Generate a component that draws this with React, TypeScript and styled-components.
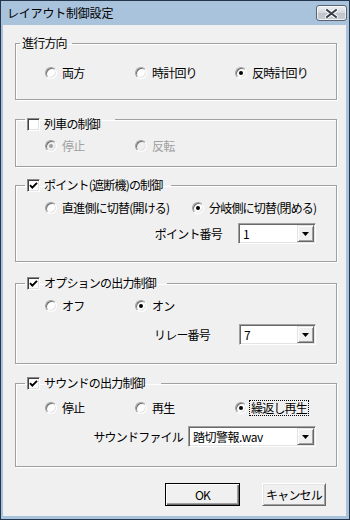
import React from "react";
import styled, { createGlobalStyle } from "styled-components";

const Global = createGlobalStyle`
  html, body { margin: 0; padding: 0; background: #ffffff; }
  body { font-family: "Noto Sans CJK JP", "Noto Sans", sans-serif; font-size: 12px; color: #000; }
  #root { width: 350px; height: 520px; }
`;

const Window = styled.div`
  width: 350px;
  height: 520px;
  box-sizing: border-box;
  border: 1px solid #23364c;
  background: #a9c3dd;
  padding: 0 3px 3px 2px;
  display: flex;
  flex-direction: column;
`;

const TitleBar = styled.div`
  height: 24px;
  flex: none;
  display: flex;
  align-items: flex-start;
  justify-content: space-between;
  padding: 0 0 0 4px;
`;

const TitleText = styled.span`
  line-height: 24px;
  font-size: 12px;
  letter-spacing: -0.2px;
  color: #000;
`;

const CloseButton = styled.div`
  width: 31px;
  height: 16px;
  margin-top: 4px;
  margin-right: -1px;
  box-sizing: border-box;
  border: 1px solid #5a6270;
  border-radius: 3px;
  background: linear-gradient(#eef0f3, #d3d7dd 50%, #bfc4cc 51%, #c9ced6);
  box-shadow: inset 0 0 0 1px rgba(255, 255, 255, 0.7);
  display: flex;
  align-items: center;
  justify-content: center;
`;

const Client = styled.div`
  flex: 1;
  background: #f0f0f0;
  display: flex;
  flex-direction: column;
  padding: 11px 9px 0 12px;
`;

const Group = styled.fieldset<{ $h: number; $mt: number }>`
  margin: ${(p) => p.$mt}px 0 0 0;
  padding: 0;
  min-width: 0;
  height: ${(p) => p.$h}px;
  box-sizing: border-box;
  border: 1px solid #a0a0a0;
  box-shadow: 1px 1px 0 #ffffff, inset 1px 1px 0 #ffffff;
  display: flex;
  flex-direction: column;
  flex: none;
`;

const Legend = styled.legend<{ $pl: number; $pr: number; $pt?: number }>`
  margin-left: ${(p) => p.$pl}px;
  padding: ${(p) => p.$pt ?? 0}px ${(p) => p.$pr}px 0 2px;
  line-height: 14px;
  font-size: 12px;
  letter-spacing: -0.8px;
  display: flex;
  align-items: center;
  color: #000;
`;

const CheckBox = styled.span`
  width: 13px;
  height: 13px;
  box-sizing: border-box;
  flex: none;
  border: 1px solid;
  border-color: #8a8a8a #ffffff #ffffff #8a8a8a;
  box-shadow: inset 1px 1px 0 #404040, inset -1px -1px 0 #e3e3e3;
  background: #ffffff;
  display: flex;
  align-items: center;
  justify-content: center;
  margin-right: 4px;
`;

const RadioRow = styled.div<{ $pt: number }>`
  display: flex;
  align-items: center;
  height: 14px;
  padding: ${(p) => p.$pt}px 0 0 29px;
`;

const RadioItem = styled.div<{ $w?: number }>`
  display: flex;
  align-items: center;
  height: 14px;
  flex: none;
  width: ${(p) => (p.$w ? `${p.$w}px` : "auto")};
`;

const RadioCircle = styled.span<{ $on?: boolean; $dis?: boolean }>`
  width: 12px;
  height: 12px;
  box-sizing: border-box;
  border-radius: 50%;
  flex: none;
  border: 1px solid;
  border-color: #a0a0a0 #ffffff #ffffff #a0a0a0;
  background: ${(p) => (p.$dis ? "#f0f0f0" : "#ffffff")};
  box-shadow: inset 1px 1px 0 #707070, inset -1px -1px 0 #e3e3e3;
  display: flex;
  align-items: center;
  justify-content: center;
  &::after {
    content: "";
    width: 4px;
    height: 4px;
    border-radius: 50%;
    background: ${(p) => (p.$dis ? "#a0a0a0" : "#000000")};
    display: ${(p) => (p.$on ? "block" : "none")};
  }
`;

const RadioText = styled.span<{ $dis?: boolean; $focus?: boolean }>`
  margin-left: ${(p) => (p.$focus ? 2 : 5)}px;
  padding: 0 ${(p) => (p.$focus ? 1 : 0)}px;
  border: ${(p) => (p.$focus ? "1px dotted #000" : "none")};
  line-height: 14px;
  white-space: nowrap;
  letter-spacing: -0.8px;
  color: ${(p) => (p.$dis ? "#a0a0a0" : "#000000")};
`;

const ComboRow = styled.div<{ $mt: number }>`
  display: flex;
  align-items: center;
  justify-content: flex-end;
  margin-top: ${(p) => p.$mt}px;
  padding-right: 20px;
`;

const FieldLabel = styled.span<{ $gap: number }>`
  margin-right: ${(p) => p.$gap}px;
  line-height: 14px;
  letter-spacing: -0.8px;
  white-space: nowrap;
`;

const Combo = styled.div<{ $w: number }>`
  width: ${(p) => p.$w}px;
  height: 21px;
  box-sizing: border-box;
  border: 1px solid;
  border-color: #a0a0a0 #ffffff #ffffff #a0a0a0;
  box-shadow: inset 1px 1px 0 #696969, inset -1px -1px 0 #e3e3e3;
  background: #ffffff;
  display: flex;
  align-items: stretch;
  padding: 1px;
`;

const ComboValue = styled.span`
  flex: 1;
  padding-left: 3px;
  line-height: 17px;
  font-size: 12px;
  letter-spacing: -0.5px;
  white-space: nowrap;
  overflow: hidden;
`;

const ComboButton = styled.span`
  width: 17px;
  flex: none;
  box-sizing: border-box;
  background: #f0f0f0;
  border: 1px solid;
  border-color: #e3e3e3 #696969 #696969 #e3e3e3;
  box-shadow: inset 1px 1px 0 #ffffff, inset -1px -1px 0 #a0a0a0;
  display: flex;
  align-items: center;
  justify-content: center;
`;

const ButtonRow = styled.div`
  display: flex;
  justify-content: flex-end;
  gap: 22px;
  margin-top: 16px;
  padding-right: 11px;
`;

const Button = styled.div<{ $w: number; $def?: boolean }>`
  width: ${(p) => p.$w}px;
  height: 23px;
  box-sizing: border-box;
  background: #f0f0f0;
  border: 1px solid;
  border-color: ${(p) => (p.$def ? "#000 #000 #000 #000" : "#ffffff #696969 #696969 #ffffff")};
  box-shadow: ${(p) =>
    p.$def
      ? "inset 1px 1px 0 #ffffff, inset -1px -1px 0 #696969, inset -2px -2px 0 #a0a0a0"
      : "inset 1px 1px 0 #e3e3e3, inset -1px -1px 0 #a0a0a0"};
  display: flex;
  align-items: center;
  justify-content: center;
  font-size: 12px;
  letter-spacing: -0.8px;
  line-height: 14px;
`;

type RadioProps = { label: string; on?: boolean; disabled?: boolean; focus?: boolean; w?: number };

function Radio({ label, on, disabled, focus, w }: RadioProps) {
  return (
    <RadioItem $w={w}>
      <RadioCircle $on={on} $dis={disabled} />
      <RadioText $dis={disabled} $focus={focus}>
        {label}
      </RadioText>
    </RadioItem>
  );
}

function Check({ checked }: { checked?: boolean }) {
  return (
    <CheckBox>
      {checked && (
        <svg width="9" height="9" viewBox="0 0 9 9">
          <path d="M1 4.2 L3.3 6.6 L8 1.8" fill="none" stroke="#000" strokeWidth="1.9" />
        </svg>
      )}
    </CheckBox>
  );
}

function ComboBox({ w, value }: { w: number; value: string }) {
  return (
    <Combo $w={w}>
      <ComboValue>{value}</ComboValue>
      <ComboButton>
        <svg width="7" height="4" viewBox="0 0 7 4">
          <path d="M0 0 H7 L3.5 4 Z" fill="#000" />
        </svg>
      </ComboButton>
    </Combo>
  );
}

export default function App() {
  return (
    <>
      <Global />
      <Window>
        <TitleBar>
          <TitleText>レイアウト制御設定</TitleText>
          <CloseButton>
            <svg width="13" height="9" viewBox="0 0 13 9">
              <path d="M2 1 L11 8 M11 1 L2 8" stroke="#ffffff" strokeWidth="4" strokeLinecap="square" />
              <path d="M2 1 L11 8 M11 1 L2 8" stroke="#3a3f48" strokeWidth="2" strokeLinecap="square" />
            </svg>
          </CloseButton>
        </TitleBar>
        <Client>
          <Group $h={64} $mt={0}>
            <Legend $pl={4} $pr={5}>進行方向</Legend>
            <RadioRow $pt={16}>
              <Radio label="両方" w={90} />
              <Radio label="時計回り" w={100} />
              <Radio label="反時計回り" on />
            </RadioRow>
          </Group>

          <Group $h={60} $mt={7}>
            <Legend $pl={9} $pr={15} $pt={10}>
              <Check />
              列車の制御
            </Legend>
            <RadioRow $pt={8}>
              <Radio label="停止" on disabled w={90} />
              <Radio label="反転" disabled />
            </RadioRow>
          </Group>

          <Group $h={84} $mt={11}>
            <Legend $pl={9} $pr={8}>
              <Check checked />
              ポイント(遮断機)の制御
            </Legend>
            <RadioRow $pt={9}>
              <Radio label="直進側に切替(開ける)" w={147} />
              <Radio label="分岐側に切替(閉める)" on />
            </RadioRow>
            <ComboRow $mt={8}>
              <FieldLabel $gap={16}>ポイント番号</FieldLabel>
              <ComboBox w={78} value="1" />
            </ComboRow>
          </Group>

          <Group $h={88} $mt={14}>
            <Legend $pl={9} $pr={11}>
              <Check checked />
              オプションの出力制御
            </Legend>
            <RadioRow $pt={9}>
              <Radio label="オフ" w={90} />
              <Radio label="オン" on />
            </RadioRow>
            <ComboRow $mt={11}>
              <FieldLabel $gap={29}>リレー番号</FieldLabel>
              <ComboBox w={77} value="7" />
            </ComboRow>
          </Group>

          <Group $h={91} $mt={12}>
            <Legend $pl={9} $pr={16}>
              <Check checked />
              サウンドの出力制御
            </Legend>
            <RadioRow $pt={11}>
              <Radio label="停止" w={90} />
              <Radio label="再生" w={100} />
              <Radio label="繰返し再生" on focus />
            </RadioRow>
            <ComboRow $mt={11}>
              <FieldLabel $gap={5}>サウンドファイル</FieldLabel>
              <ComboBox w={128} value="踏切警報.wav" />
            </ComboRow>
          </Group>

          <ButtonRow>
            <Button $w={75} $def>OK</Button>
            <Button $w={64}>キャンセル</Button>
          </ButtonRow>
        </Client>
      </Window>
    </>
  );
}
